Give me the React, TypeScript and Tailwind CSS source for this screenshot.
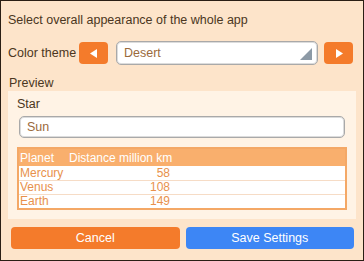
import React from "react";

export default function App() {
  const rows = [
    ["Mercury", "58"],
    ["Venus", "108"],
    ["Earth", "149"],
  ];
  return (
    <div className="w-[364px] h-[261px] border border-[#2a1e14] bg-[#fde4ca] flex flex-col px-[7px] font-['Liberation_Sans',Arial,sans-serif] text-[12px] text-[#4b3621]">
      <div className="pt-[11px] leading-[16px] text-[12.5px]">Select overall appearance of the whole app</div>
      <div className="mt-[13px] h-[24px] flex items-center pr-[3px]">
        <div className="w-[71px] leading-[16px] text-[12.5px]">Color theme</div>
        <button className="w-[29px] h-[22px] rounded-[4px] bg-[#f47b2b] flex items-center justify-center">
          <svg width="8" height="9" viewBox="0 0 8 9">
            <polygon points="7,0 7,9 0,4.5" fill="#ffffff" />
          </svg>
        </button>
        <div className="ml-[8px] flex-1 h-[24px] rounded-[5px] border border-[#a9a9a9] shadow-[inset_0_0_0_1px_#dcdcdc] bg-white flex items-center pl-[7px] relative">
          <span className="text-[#9b6a3c] leading-[16px] text-[12.5px]">Desert</span>
          <svg className="absolute right-[5px] bottom-[4px]" width="12" height="12" viewBox="0 0 12 12">
            <polygon points="12,0 12,12 0,12" fill="#8d9aa6" />
          </svg>
        </div>
        <button className="ml-[6px] w-[29px] h-[22px] rounded-[4px] bg-[#f47b2b] flex items-center justify-center">
          <svg width="8" height="9" viewBox="0 0 8 9">
            <polygon points="1,0 1,9 8,4.5" fill="#ffffff" />
          </svg>
        </button>
      </div>
      <div className="mt-[11px] leading-[15px] pl-[1px] text-[12.5px]">Preview</div>
      <div className="bg-[#fff3e5] px-[9px] pt-[5px] pb-[9px] flex flex-col">
        <div className="leading-[16px] text-[12.5px]">Star</div>
        <div className="mt-[4px] mx-[2px] h-[22px] rounded-[5px] border border-[#a9a9a9] shadow-[inset_0_0_0_1px_#dcdcdc] bg-white flex items-center pl-[7px]">
          <span className="text-[#9b6a3c] leading-[16px] text-[12.5px]">Sun</span>
        </div>
        <div className="mt-[9px] border-2 border-[#f4a866] bg-white flex flex-col">
          <div className="h-[17px] bg-[#f9af6d] text-white grid grid-cols-[48px_106px_1fr] items-center leading-[14px]">
            <div className="pl-[1px]">Planet</div>
            <div className="pl-[2px]">Distance million km</div>
            <div />
          </div>
          {rows.map(([p, d], i) => (
            <div
              key={p}
              className={
                i === 0
                  ? "h-[14px] grid grid-cols-[48px_106px_1fr] items-center leading-[14px] text-[#e8914b]"
                  : "h-[14px] border-t border-[#f6dcc6] grid grid-cols-[48px_106px_1fr] items-center leading-[13px] text-[#e8914b]"
              }
            >
              <div className="pl-[1px]">{p}</div>
              <div className="text-right pr-[3px]">{d}</div>
              <div />
            </div>
          ))}
        </div>
      </div>
      <div className="mt-[8px] flex gap-[6px] pl-[3px] pr-[2px]">
        <button className="flex-1 h-[22px] rounded-[4px] bg-[#f47b2b] text-white text-[12.5px] leading-[16px]">Cancel</button>
        <button className="flex-1 h-[22px] rounded-[4px] bg-[#3d86f5] text-white text-[12.5px] leading-[16px]">Save Settings</button>
      </div>
    </div>
  );
}
